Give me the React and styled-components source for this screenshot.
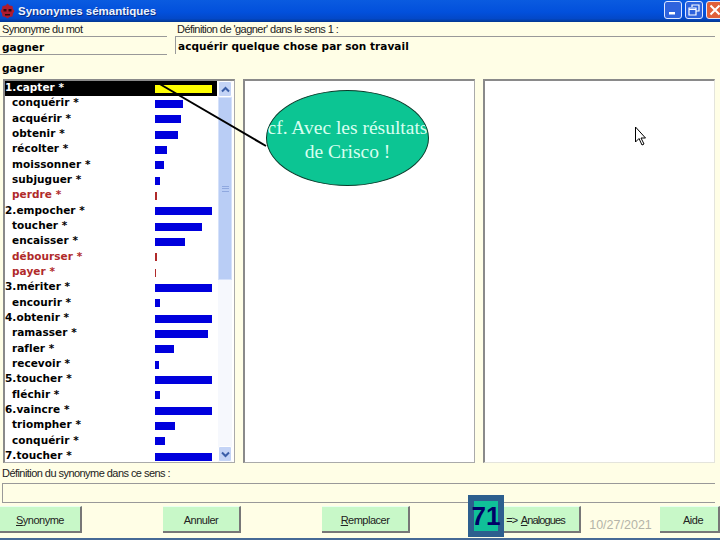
import React from 'react';
import styled, { createGlobalStyle } from 'styled-components';

const Global = createGlobalStyle`
  html, body { margin: 0; padding: 0; background: #fffee6; }
  #root { width: 720px; height: 540px; overflow: hidden; }
`;
const Page = styled.div`
  position: relative; width: 720px; height: 540px; overflow: hidden;
  background: #fffee6; display: flex; flex-direction: column;
  font-family: "Liberation Sans", Arial, sans-serif; color: #111;
`;
const TitleBar = styled.div`
  height: 22px; flex: none; display: flex; align-items: center; padding: 0; gap: 3px;
  background: linear-gradient(180deg, #0a5be0 0%, #0250dc 55%, #0348c8 85%, #03368f 100%);
`;
const TitleText = styled.div`
  flex: 1; color: #eef4ff; font: bold 11.5px "Liberation Sans", sans-serif; text-shadow: 1px 1px 0 #0a2c80;
`;
const WinButton = styled.div`
  width: 18px; height: 18px; box-sizing: border-box; border: 1px solid #dfe8ff; border-radius: 3px;
  background: ${p => (p.$close ? '#e0603a' : '#2f63dd')}; display: flex; align-items: center; justify-content: center;
  margin-top: -3px;
  &:last-child { margin-right: -4px; }
`;
const TopRow = styled.div`
  display: flex; height: 35px; flex: none;
`;
const WordField = styled.div`
  width: 167px; flex: none; display: flex; flex-direction: column;
`;
const DefField = styled.div`
  flex: 1; display: flex; flex-direction: column; margin-left: 8px; margin-right: 5px;
`;
const Label = styled.div`
  font-size: 11px; line-height: 14px; height: 14px; padding-left: ${p => p.$indent || 0}px; color: #222;
  letter-spacing: -.55px; white-space: nowrap; overflow: hidden;
`;
const WordValue = styled.div`
  height: 19px; box-sizing: border-box; border-top: 1px solid #999; border-bottom: 1px solid #999;
  padding-left: 2px; font: bold 10.5px/20px "DejaVu Sans", sans-serif; letter-spacing: .05px; color: #000;
`;
const DefValue = styled.div`
  height: 18px; box-sizing: border-box; border-top: 1px solid #999; border-left: 1px solid #999;
  padding-left: 2px; font: bold 10.5px/18px "DejaVu Sans", sans-serif; letter-spacing: .05px; color: #000;
`;
const Heading = styled.div`
  height: 22px; flex: none; padding-left: 2px; font: bold 10.5px/22px "DejaVu Sans", sans-serif; letter-spacing: .05px; color: #000;
`;
const Panels = styled.div`
  display: flex; gap: 8px; height: 384px; flex: none; padding: 0 5px 0 3px;
`;
const Panel = styled.div`
  flex: 1 1 0; min-width: 0; box-sizing: border-box; background: #fff; display: flex;
  border: 2px solid #8a8a8a; border-right-width: 1px; border-bottom-width: 1px;
  border-right-color: ${p => (p.$faint ? '#e4e4dc' : '#aaa')}; border-bottom-color: ${p => (p.$faint ? '#e4e4dc' : '#aaa')};
`;
const List = styled.div`
  flex: 1; min-width: 0; display: flex; flex-direction: column; overflow: hidden;
`;
const Row = styled.div`
  flex: none; height: 15.33px; display: flex; align-items: center;
  background: ${p => (p.$selected ? '#000' : 'transparent')};
  color: ${p => (p.$selected ? '#fff' : p.$red ? '#b02a2a' : '#000')};
  font: bold 10.5px "DejaVu Sans", sans-serif; letter-spacing: .05px; white-space: nowrap;
`;
const RowLabel = styled.div`
  width: 150px; box-sizing: border-box; flex: none; overflow: hidden; padding-left: ${p => (p.$sub ? 7 : 0)}px; padding-bottom: 3px; height: 15px; line-height: 13px;
`;
const Bar = styled.div`
  height: 8px; background: ${p => (p.$selected ? '#ffff00' : p.$red ? '#b02a2a' : '#0000dd')};
`;
const Scroll = styled.div`
  width: 14px; flex: none; margin: 0 2px 0 1px; display: flex; flex-direction: column; background: #f6f8fd;
`;
const ScrollButton = styled.div`
  height: 16px; flex: none; box-sizing: border-box; border: 1px solid #fff; border-radius: 2px; background: #c4d4f6;
  display: flex; align-items: center; justify-content: center;
`;
const Thumb = styled.div`
  height: 183px; flex: none; background: #b9cdf5; border: 1px solid #d5e1fa; box-sizing: border-box; display: flex; align-items: center; justify-content: center;
`;
const Grip = styled.div`
  width: 7px; height: 6px; border-top: 1px solid #8fa8df; border-bottom: 1px solid #8fa8df; box-sizing: border-box;
  &::after { content: ''; display: block; height: 1px; background: #8fa8df; margin-top: 1px; }
`;
const Spacer = styled.div`
  flex: 1;
`;
const BottomLabel = styled(Label)`
  height: 20px; line-height: 20px; flex: none; padding-left: 2px;
`;
const DefBox = styled.div`
  height: 20px; flex: none; margin: 0 5px 0 2px; box-sizing: border-box; border: 1px solid #999; border-right: none;
`;
const Footer = styled.div`
  display: flex; align-items: flex-start; height: 32px; flex: none; margin-top: 3px;
`;
const Btn = styled.div`
  width: ${p => p.$w}px; height: 27px; flex: none; margin-left: ${p => p.$ml || 0}px; box-sizing: border-box;
  background: #c8f8c8; border-right: 2px solid #777; border-bottom: 2px solid #777; border-top: 1px solid #eafff0;
  display: flex; align-items: center; justify-content: center; padding: 1px 0 0 ${p => p.$pl || 0}px;
  font-size: 11px; letter-spacing: -.5px; color: #222;
`;
const Analogues = styled.span`
  padding-left: 2px; letter-spacing: -.9px; word-spacing: 2px;
`;
const DateText = styled.div`
  width: 79px; flex: none; text-align: center; font-size: 12.5px; color: #b4b4a8; padding-top: 12px;
`;
const BottomLine = styled.div`
  height: 2px; flex: none; background: #466a96;
`;
const Badge = styled.div`
  position: absolute; left: 468px; top: 495px; width: 36px; height: 42px; box-sizing: border-box;
  border: 6px solid #2d5f8e; background: #10c098; color: #000066;
  font: bold 26px/30px "Liberation Sans", sans-serif; white-space: nowrap;
  display: flex; align-items: center; justify-content: center;
`;
const Callout = styled.div`
  position: absolute; left: 266px; top: 90px; width: 163px; height: 96px; box-sizing: border-box; overflow: hidden;
  border: 1px solid #0a3a2a; border-radius: 50%; background: #0cc593; color: #d8fff0;
  font: 19.5px/24px "Liberation Serif", serif; text-align: center; display: flex; align-items: flex-start; justify-content: center; white-space: nowrap;
  padding-top: 25px;
`;
const LeaderLine = styled.svg`
  position: absolute; left: 150px; top: 78px; width: 125px; height: 75px; overflow: visible;
`;
const Cursor = styled.svg`
  position: absolute; left: 634px; top: 126px; width: 14px; height: 22px;
`;

const rows = [
  ['1.capter *', 57, 0, 0, 1], ['conquérir *', 28, 1], ['acquérir *', 26, 1], ['obtenir *', 23, 1], ['récolter *', 12, 1],
  ['moissonner *', 9, 1], ['subjuguer *', 5, 1], ['perdre *', 2, 1, 1], ['2.empocher *', 57], ['toucher *', 47, 1],
  ['encaisser *', 30, 1], ['débourser *', 2, 1, 1], ['payer *', 1, 1, 1], ['3.mériter *', 57], ['encourir *', 5, 1],
  ['4.obtenir *', 57], ['ramasser *', 53, 1], ['rafler *', 19, 1], ['recevoir *', 4, 1], ['5.toucher *', 57],
  ['fléchir *', 5, 1], ['6.vaincre *', 57], ['triompher *', 20, 1], ['conquérir *', 10, 1], ['7.toucher *', 57],
];

const Chevron = ({ up }) => (
  <svg width="9" height="7" viewBox="0 0 9 7">
    <path d={up ? 'M1 5.5L4.5 2L8 5.5' : 'M1 1.5L4.5 5L8 1.5'} fill="none" stroke="#3a5ea8" strokeWidth="2" />
  </svg>
);

export default function App() {
  return (
    <Page>
      <Global />
      <TitleBar>
        <svg width="15" height="16" viewBox="0 0 15 16">
          <path d="M7.5 0.5l2 2 3 .5 .5 3 1.5 2-1.5 2.5-.5 3-3 .5-2 1.5-2-1.5-3-.5-.5-3L0.5 8 2 6l.5-3 3-.5z" fill="#b01c30" />
          <path d="M3.5 6h3v2.5h-3zM8.5 6h3v2.5h-3zM5 11h5v1.5H5z" fill="#300a12" />
        </svg>
        <TitleText>Synonymes sémantiques</TitleText>
        <WinButton>
          <svg width="10" height="10" viewBox="0 0 10 10"><rect x="1" y="7" width="6" height="2.5" fill="#fff" /></svg>
        </WinButton>
        <WinButton>
          <svg width="12" height="12" viewBox="0 0 12 12"><path d="M4 3V1h7v6H8.5M1 4h7v7H1zM1 5.5h7" fill="none" stroke="#fff" strokeWidth="1.2" /></svg>
        </WinButton>
        <WinButton $close>
          <svg width="12" height="12" viewBox="0 0 12 12"><path d="M1.5 1.5l9 9M10.5 1.5l-9 9" stroke="#fff" strokeWidth="2" /></svg>
        </WinButton>
      </TitleBar>
      <TopRow>
        <WordField>
          <Label $indent={2}>Synonyme du mot</Label>
          <WordValue>gagner</WordValue>
        </WordField>
        <DefField>
          <Label $indent={2}>Définition de 'gagner' dans le sens 1 :</Label>
          <DefValue>acquérir quelque chose par son travail</DefValue>
        </DefField>
      </TopRow>
      <Heading>gagner</Heading>
      <Panels>
        <Panel>
          <List>
            {rows.map(([t, w, sub, red, sel], i) => (
              <Row key={i} $red={red} $selected={sel}>
                <RowLabel $sub={sub}>{t}</RowLabel>
                <Bar $red={red} $selected={sel} style={{ width: w }} />
              </Row>
            ))}
          </List>
          <Scroll>
            <ScrollButton><Chevron up /></ScrollButton>
            <Thumb><Grip /></Thumb>
            <Spacer />
            <ScrollButton><Chevron /></ScrollButton>
          </Scroll>
        </Panel>
        <Panel />
        <Panel $faint />
      </Panels>
      <BottomLabel>Définition du synonyme dans ce sens :</BottomLabel>
      <DefBox />
      <Footer>
        <Btn $w={82}><span><u>S</u>ynonyme</span></Btn>
        <Btn $w={78} $ml={81}>Annuler</Btn>
        <Btn $w={88} $ml={81}><span><u>R</u>emplacer</span></Btn>
        <Btn $w={91} $ml={80}><Analogues>=&gt; <u>A</u>nalogues</Analogues></Btn>
        <DateText>10/27/2021</DateText>
        <Btn $w={60} $pl={8}>Aide</Btn>
      </Footer>
      <BottomLine />
      <LeaderLine viewBox="0 0 125 75">
        <line x1="8" y1="5" x2="116" y2="68" stroke="#000" strokeWidth="2" />
      </LeaderLine>
      <Callout>
        <span>cf. Avec les résultats<br />de Crisco !</span>
      </Callout>
      <Cursor viewBox="0 0 14 22">
        <path d="M1.5 1v15l3.5-3.5 3 6.5 2-1-3-6h4.5z" fill="#fff" stroke="#000" strokeWidth="1" />
      </Cursor>
      <Badge>71</Badge>
    </Page>
  );
}
